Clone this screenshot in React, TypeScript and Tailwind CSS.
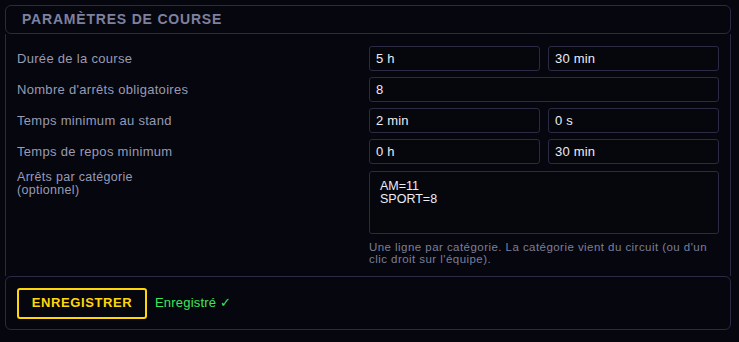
import React from "react";

const font = { fontFamily: '"Liberation Sans", Arial, sans-serif' };

function Field({ value }: { value: string }) {
  return (
    <div className="h-[25px] flex items-center rounded-[3px] border border-[#2a2a45] bg-[#06060d] pl-[6px] text-[13px] tracking-[0.2px] text-[#ecedf5]">
      {value}
    </div>
  );
}

function Label({ children }: { children: React.ReactNode }) {
  return (
    <div className="h-[25px] flex items-center text-[13px] tracking-[0.3px] text-[#979bb5]">{children}</div>
  );
}

export default function App() {
  return (
    <div className="w-full h-[342px] bg-[#06060e] pt-[5px] pl-[5px]" style={font}>
      <div className="w-[726px] flex flex-col">
        <div className="h-[29px] rounded-[6px] border border-[#2a2a45] flex items-center pl-[16px]">
          <span className="text-[14px] font-bold tracking-[0.8px] text-[#7d819f]">PARAMÈTRES DE COURSE</span>
        </div>
        <div className="border-x border-[#2a2a45] px-[11px] pt-[12px] pb-[11px]">
          <div className="grid grid-cols-[352px_1fr] gap-y-[6px]">
            <Label>Durée de la course</Label>
            <div className="grid grid-cols-2 gap-[8px]">
              <Field value="5 h" />
              <Field value="30 min" />
            </div>
            <Label>Nombre d'arrêts obligatoires</Label>
            <Field value="8" />
            <Label>Temps minimum au stand</Label>
            <div className="grid grid-cols-2 gap-[8px]">
              <Field value="2 min" />
              <Field value="0 s" />
            </div>
            <Label>Temps de repos minimum</Label>
            <div className="grid grid-cols-2 gap-[8px]">
              <Field value="0 h" />
              <Field value="30 min" />
            </div>
            <div className="flex flex-col text-[12.5px] leading-[13px] tracking-[0.3px] text-[#979bb5] pt-[1px]">
              <span>Arrêts par catégorie</span>
              <span>(optionnel)</span>
            </div>
            <div className="flex flex-col mt-[1px]">
              <div className="h-[63px] rounded-[3px] border border-[#2a2a45] bg-[#06060d] pl-[10px] pt-[8px] flex flex-col text-[12.5px] leading-[13px] text-[#ecedf5]">
                <span>AM=11</span>
                <span>SPORT=8</span>
              </div>
              <div className="mt-[7px] flex flex-col text-[11.5px] leading-[12px] tracking-[0.45px] text-[#7b7f99]">
                <span>Une ligne par catégorie. La catégorie vient du circuit (ou d'un</span>
                <span>clic droit sur l'équipe).</span>
              </div>
            </div>
          </div>
        </div>
        <div className="h-[54px] rounded-[6px] border border-[#2a2a45] flex items-center pl-[11px] gap-[8px]">
          <div className="w-[130px] h-[31px] rounded-[3px] border-2 border-[#ffd60a] flex items-center justify-center text-[13px] font-bold tracking-[0.6px] text-[#ffd60a]">
            ENREGISTRER
          </div>
          <span className="text-[13px] tracking-[0.2px] text-[#3ee65a]">Enregistré ✓</span>
        </div>
      </div>
    </div>
  );
}
